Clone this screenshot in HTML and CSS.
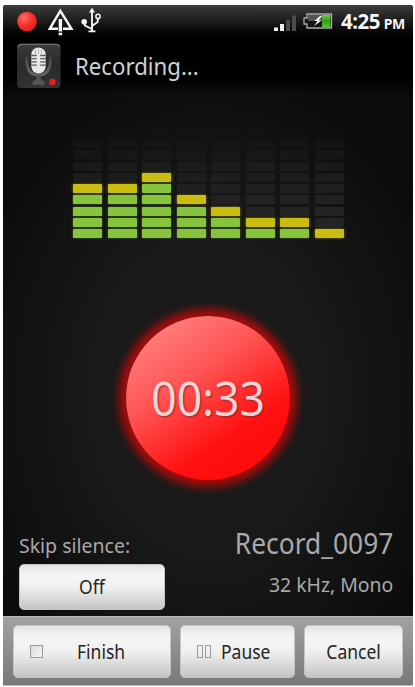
FILE: index.html
```html
<!DOCTYPE html>
<html lang="en">
<head>
<meta charset="utf-8">
<title>Recording</title>
<link rel="stylesheet" href="styles.css">
</head>
<body>
<main class="phone">
  <header class="status">
    <svg class="notices" width="96" height="34" viewBox="0 0 96 34">
      <defs><radialGradient id="dot" cx=".35" cy=".3" r=".7"><stop offset="0" stop-color="#ff6a65"/><stop offset=".6" stop-color="#f6302c"/><stop offset="1" stop-color="#e02220"/></radialGradient></defs>
      <circle cx="24" cy="16.5" r="9.8" fill="url(#dot)"/>
      <g fill="none" stroke="#f4f4f4" stroke-width="2.5"><path d="M55 23.7H46.8L57.3 5.8L68.4 23.7H60"/><path d="M57.4 14V26.5" stroke-width="3.4"/></g>
      <rect x="55.6" y="27.7" width="3.6" height="2.5" fill="#f4f4f4"/>
      <g fill="none" stroke="#f4f4f4" stroke-width="1.9"><path d="M89 5V26M81.2 17L82 20.5L89 24M95 13.5L94.6 17L89 21M85.5 26.4H92.5"/><circle cx="95" cy="11.4" r="2.1" stroke-width="1.5"/></g>
      <path d="M89 2.7L92 7.5H86Z" fill="#f4f4f4"/>
      <circle cx="81.2" cy="16.7" r="2.8" fill="#f4f4f4"/>
    </svg>
    <svg class="signal" width="72" height="34" viewBox="0 0 72 34">
      <defs><linearGradient id="charge" x2="0" y2="1"><stop offset="0" stop-color="#79c943"/><stop offset=".5" stop-color="#2f9e16"/><stop offset="1" stop-color="#55c52d"/></linearGradient></defs>
      <path d="M4 22.5H8V26H4ZM10 19H14V26H10Z" fill="#f1f1f1"/>
      <path d="M16 15H20V26H16ZM22 10.5H26V26H22Z" fill="#4b4b4b"/>
      <path d="M37 9H61.5V23H37V19H34V13H37Z" fill="#151515" stroke="#aaa" stroke-width="1.3"/>
      <path d="M38 10H52V16H38Z" fill="#555"/>
      <path d="M52 10H60.5V22H52Z" fill="url(#charge)"/>
      <path d="M50 11L44.5 16H47.5L44 21L51.5 15.5H48.5L52 11Z" fill="#fff"/>
    </svg>
    <div class="clock">4:25 <small>PM</small></div>
  </header>

  <section class="heading">
    <svg width="46" height="46" viewBox="0 0 46 46">
      <defs>
        <linearGradient id="tile" x2="0" y2="1"><stop offset="0" stop-color="#3b3b3b"/><stop offset=".5" stop-color="#292929"/><stop offset="1" stop-color="#333"/></linearGradient>
        <linearGradient id="stand" x2="0" y2="1"><stop offset="0" stop-color="#444"/><stop offset="1" stop-color="#666"/></linearGradient>
      </defs>
      <rect x="1" y="1" width="43.5" height="44" rx="4" fill="url(#tile)"/>
      <path d="M2 4Q2.5 1.2 6 1.2H40Q43 1.2 43.8 4" fill="none" stroke="#858585"/>
      <path d="M10.8 14V19Q11.5 32 22.5 32Q33.5 32 34.2 19V14" fill="none" stroke="url(#stand)" stroke-width="3"/>
      <path d="M20.3 32H24.7V36.5L28.5 38.5V42H16.5V38.5L20.3 36.5Z" fill="#555"/>
      <rect x="15.3" y="4.5" width="14.4" height="26" rx="7.2" fill="#e8e8e8"/>
      <path d="M15.3 12.5H20.8M24.2 12.5H29.7M15.3 15.7H20.8M24.2 15.7H29.7M15.3 18.9H20.8M24.2 18.9H29.7M15.3 22.1H20.8M24.2 22.1H29.7" stroke="#5b5b5b" stroke-width="1.3"/>
      <path d="M19.5 6.5V11M22.5 5.5V11M25.5 6.5V11" stroke="#aaa" stroke-width=".8"/>
      <circle cx="36.5" cy="39" r="3.3" fill="#ee1719"/>
    </svg>
    <h1>Recording...</h1>
  </section>

  <section class="meter" id="meter"></section>

  <section class="timer"><div class="disc"><span>00:33</span></div></section>

  <section class="details">
    <div class="silence"><label>Skip silence:</label><button class="toggle"><span>Off</span></button></div>
    <div class="file"><div class="name">Record_0097</div><div class="format">32 kHz, Mono</div></div>
  </section>

  <footer class="actions">
    <button class="finish"><i class="stop"></i><span>Finish</span></button>
    <button class="pause"><i></i><i></i><span>Pause</span></button>
    <button class="cancel"><span>Cancel</span></button>
  </footer>
</main>
<script src="meter.js"></script>
</body>
</html>
```
FILE: styles.css
```css
* { box-sizing: border-box; }
body { margin: 0; background: #fff; font-family: "Noto Sans", "Open Sans", sans-serif; }
.phone {
  width: 410px; height: 681px; margin: 5px 0 0 3px; overflow: hidden;
  display: flex; flex-direction: column; border-top-left-radius: 3px; border-top-right-radius: 3px;
  background: radial-gradient(ellipse 260px 350px at 205px 390px, #1e1e1e 0%, #191919 45%, #0b0b0b 100%);
}
.status { height: 34px; flex: none; display: flex; background: linear-gradient(#3c3c3c, #242424 35%, #090909 75%, #000); }
.notices { flex: none; overflow: visible; }
.signal { margin-left: 171px; flex: none; }
.clock { color: #f4f4f4; font-weight: 700; font-size: 20.5px; line-height: 33px; white-space: nowrap; margin-left: -1px; letter-spacing: -.5px; }
.clock small { font-size: 14px; letter-spacing: -.5px; margin-left: -1px; }
.heading { height: 56px; flex: none; display: flex; padding: 4px 0 0 13px; background: linear-gradient(#000 70%, transparent); }
h1 { margin: 0 0 0 13px; font-size: 24px; font-weight: 400; line-height: 46px; color: #d2d2d2; transform: scaleX(.925); transform-origin: left; }
.meter { flex: none; width: 271px; height: 110px; margin: 33px 0 0 70px; display: grid; grid-template-columns: repeat(8, 1fr); column-gap: 5.6px; }
.column { display: flex; flex-direction: column; justify-content: space-between; }
.cell { height: 9px; border-radius: 1px; background: #242424; }
.green { background: #87c43d; box-shadow: 0 0 2px #578b22; }
.yellow { background: #c9bd12; box-shadow: 0 0 3px #827908; }
.timer { flex: none; height: 272px; display: flex; align-items: center; justify-content: center; margin-top: 24px; }
.disc {
  width: 164px; height: 164px; border-radius: 50%; display: flex; align-items: center; justify-content: center;
  background: linear-gradient(146deg, #ff8585 6%, #ff5555 38%, #ff1010 70%, #ff0808);
  box-shadow: 0 0 8px 7px #a90b0b;
}
.disc span { color: #f0d5d5; font-size: 47px; line-height: 60px; text-shadow: 1px 1px 2px #702020bb; transform: scaleX(.945); }
.details { flex: 1; display: flex; justify-content: space-between; padding: 0 20px 0 16px; color: #a9a9a9; }
.silence { display: flex; flex-direction: column; }
label { width: 146px; margin-top: -3px; font-size: 20.5px; line-height: 28px; white-space: nowrap; transform: scaleX(.95); transform-origin: left; }
button {
  padding: 0; border: 1px solid #c5c5c5; border-radius: 5px; font: 19px "Noto Sans", sans-serif; color: #252525;
  background: linear-gradient(#e4e4e4, #f5f5f5 22%, #f0f0f0 50%, #c5c5c5);
}
button span { display: inline-block; transform: scaleX(.92); transform-origin: left; }
.toggle { width: 146px; height: 46px; margin-top: 5px; }
.toggle span, .cancel span { transform-origin: center; }
.file { text-align: right; white-space: nowrap; }
.name { margin-top: -10px; font-size: 28.5px; line-height: 38px; transform: scaleX(.925); transform-origin: right; }
.format { margin-top: 10px; font-size: 20px; line-height: 26px; transform: scaleX(.97); transform-origin: right; }
.actions { flex: none; height: 70px; padding: 8px 10px 7px; display: flex; gap: 9px; border-top: 1px solid #b8b8b8; border-bottom: 1px solid #bbb; background: linear-gradient(#a2a2a2, #787878); }
.actions button { display: flex; align-items: center; }
.finish { width: 158px; }
.pause { width: 115px; }
.actions .cancel { width: 99px; justify-content: center; }
.stop { width: 13px; height: 13px; border: 1px solid #999; margin: 0 34px 0 16px; background: linear-gradient(135deg, #ddd, #f5f5f5); }
.pause i { width: 6px; height: 13px; border: 1px solid #999; margin-right: 2px; }
.pause i:first-child { margin-left: 16px; }
.pause span { margin-left: 8px; }
```
FILE: meter.js
```js
const levels = [5, 5, 6, 4, 3, 2, 2, 1];
const meter = document.getElementById("meter");
for (const level of levels) {
  const column = document.createElement("div");
  column.className = "column";
  for (let row = 10; row > 0; row--) {
    const cell = document.createElement("div");
    cell.className = "cell" + (row === level ? " yellow" : row < level ? " green" : "");
    if (row > level) cell.style.opacity = Math.min(1, (10.3 - row) / 7);
    column.append(cell);
  }
  meter.append(column);
}
```
